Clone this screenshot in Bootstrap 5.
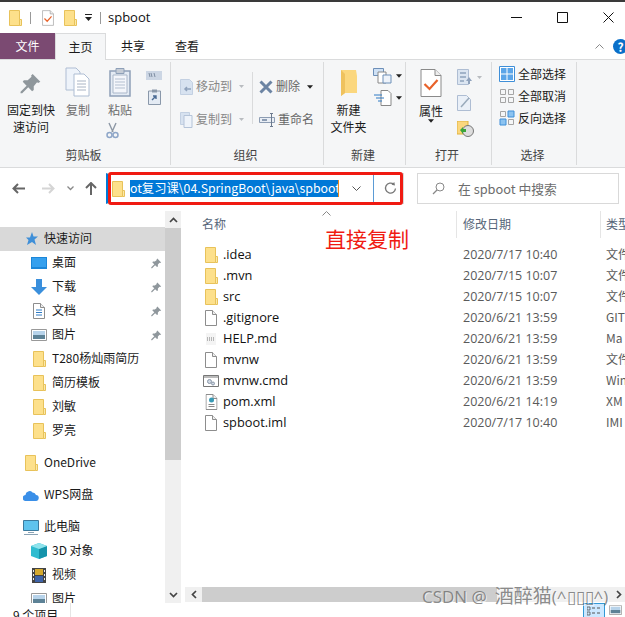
<!DOCTYPE html>
<html lang="zh-CN">

<head>
    <meta charset="UTF-8" />
    <meta name="viewport" content="width=device-width, initial-scale=1.0">
    <title>spboot</title>
    <link href="https://cdn.jsdelivr.net/npm/bootstrap@5.3.0/dist/css/bootstrap.min.css" rel="stylesheet">
    <style>
        html, body { height: 617px; overflow: hidden; }
        body { font-family: "Noto Sans CJK SC", "Open Sans", sans-serif; font-size: 12px; line-height: 1.2; color: #1a1a1a; background: #fff; }
        svg { display: block; flex: none; }
        .defs-holder { position: absolute; }
        .win { position: relative; width: 625px; height: 617px; overflow: hidden; border-top: 2px solid #3a3a3a; }

        /* title bar */
        .title-row { height: 31px; padding-left: 9px; }
        .title-name { font-family: "Open Sans", sans-serif; font-size: 13px; margin-left: 7px; color: #111; }
        .qsep { width: 1px; height: 12px; background: #999; margin: 0 8px; }
        .qsep-end { margin-right: 0; }
        .q-doc { margin-left: 3px; }
        .q-folder { margin-left: 10px; }
        .win-btns { margin-left: auto; margin-right: -6px; }
        .win-btn { width: 46px; display: flex; justify-content: center; }

        /* tabs */
        .tabs-row { height: 27px; border-bottom: 1px solid #dadbdc; }
        .tab-file { width: 55px; height: 26px; background: #7b4a72; color: #fff; display: flex; align-items: center; justify-content: center; }
        .tab-item { width: 54px; height: 27px; display: flex; align-items: center; justify-content: center; }
        .tab-on { width: 51px; background: #f5f6f7; border: 1px solid #dadbdc; border-bottom: 0; }
        .help-wrap { margin-left: auto; margin-right: -3px; gap: 9px; }
        .help-dot { width: 15px; height: 15px; border-radius: 50%; background: #0a6fc9; color: #fff; font-weight: 700; font-size: 12px; text-align: center; line-height: 15px; }

        /* ribbon */
        .ribbon { height: 108px; background: #f5f6f7; border-bottom: 1px solid #dadbdc; padding-top: 2px; }
        .rgroup { height: 103px; border-right: 1px solid #dadbdc; display: flex; flex-direction: column; }
        .rg-clip { width: 171px; }
        .rg-org { width: 153px; }
        .rg-new { width: 82px; }
        .rg-open { width: 86px; }
        .rg-sel { width: 85px; }
        .rbody { flex: 1; display: flex; min-height: 0; }
        .rbody-org { padding: 8px 0 0 9px; }
        .rbody-sel { flex-direction: column; padding: 1px 0 0 7px; }
        .rlabel { height: 20px; line-height: 20px; text-align: center; color: #444; padding-right: 3px; }
        .big-btn { display: flex; flex-direction: column; align-items: center; text-align: center; line-height: 17px; }
        .dim { color: #6d6d6d; }
        .dimmer { color: #888; }
        .dark-grey { color: #666; }
        .b-pin { width: 62px; padding-top: 11px; }
        .b-pin svg { margin-bottom: 6px; }
        .b-copy { width: 32px; padding-top: 5px; }
        .b-paste { width: 52px; padding-top: 5px; }
        .b-new { width: 49px; padding-top: 7px; }
        .b-prop { width: 50px; padding-top: 7px; }
        .b-prop svg:first-child { margin-bottom: 5px; }
        .ic-gap { margin-bottom: 4px; }
        .scissors { margin: 4px 16px 0 0; }
        .clip-side { padding-top: 9px; gap: 9px; }
        .col-movers { width: 72px; }
        .org-sep { width: 1px; height: 52px; background: #dadbdc; margin: 2px 6px 0 0; }
        .mini { display: flex; align-items: center; gap: 3px; height: 33px; white-space: nowrap; }
        .sel-row { display: flex; align-items: center; gap: 3px; height: 22px; white-space: nowrap; }
        .new-side { padding-top: 6px; gap: 6px; }
        .open-side { padding: 7px 0 0 1px; gap: 10px; }

        /* address bar */
        .addr-row { height: 40px; padding-top: 5px; }
        .nav-ic { height: 31px; display: flex; align-items: center; justify-content: center; }
        .nav-back { width: 33px; padding-left: 3px; }
        .nav-fwd { width: 30px; }
        .nav-drop { width: 14px; }
        .nav-up { width: 27px; }
        .addr-box { width: 298px; height: 31px; margin-left: 2px; border: 1px solid #d9d9d9; border-left: 2px solid #0078d7; display: flex; align-items: center; }
        .addr-folder { margin-left: 4px; }
        .addr-text { width: 209px; height: 17px; margin-left: 5px; background: #0078d7; color: #fff; font-size: 12.3px; line-height: 16px; overflow: hidden; white-space: nowrap; border-right: 1px solid #e8871e; flex: none; }
        .addr-chev { width: 34px; display: flex; justify-content: center; flex: none; }
        .addr-refresh { width: 30px; height: 29px; border-left: 1px solid #5b9bd5; padding-left: 3px; display: flex; align-items: center; justify-content: center; flex: none; }
        .search-box { width: 202px; height: 31px; margin-left: 13px; border: 1px solid #d9d9d9; color: #6d6d6d; padding-left: 14px; font-size: 12.8px; }
        .search-box span { margin-left: 13px; }

        /* left tree */
        .content { height: 395px; }
        .side { width: 165px; padding-top: 19px; overflow: hidden; height: 395px; flex: none; }
        .nav-row { height: 24px; display: flex; align-items: center; white-space: nowrap; padding-left: 31px; gap: 5px; }
        .nav-row span { margin-bottom: 2px; }
        .nav-row.lvl0 { padding-left: 23px; }
        .nav-row.on { background: #d9d9d9; }
        .nav-gap { height: 8px; }
        .nav-pin { margin-left: auto; margin-right: 3px; }
        .ico-slot { width: 16px; display: flex; justify-content: center; flex: none; }
        .vbar { width: 16px; background: #f0f0f0; flex: none; height: 392px; margin-top: 3px; display: flex; flex-direction: column; }
        .vbar-arrow { height: 17px; display: flex; align-items: center; justify-content: center; flex: none; }
        .vbar-thumb { height: 232px; background: #cdcdcd; }
        .vbar-rest { flex: 1; }

        /* file list */
        .main-pane { flex: 1; min-width: 0; padding: 3px 0 1px 2px; position: relative; overflow: hidden; height: 395px; display: flex; flex-direction: column; }
        .cols { display: flex; height: 27px; align-items: center; color: #566579; position: relative; flex: none; }
        .col-name { width: 273px; padding-left: 19px; flex: none; }
        .col-date { width: 144px; padding-left: 6px; flex: none; border-left: 1px solid #e5e5e5; height: 27px; line-height: 26px; }
        .col-kind { padding-left: 5px; border-left: 1px solid #e5e5e5; height: 27px; line-height: 26px; white-space: nowrap; }
        .sort-up { position: absolute; left: 139px; top: 0; }
        .file-list { flex: 1; padding-top: 6px; min-height: 0; }
        .file-row { height: 21px; display: flex; align-items: center; white-space: nowrap; }
        .f-name { width: 272px; flex: none; display: flex; align-items: center; padding-left: 20px; gap: 4px; font-size: 12.8px; font-family: "Open Sans", sans-serif; color: #111; }
        .f-date { width: 143px; flex: none; padding-left: 8px; font-family: "Open Sans", sans-serif; font-size: 12.5px; color: #5a5a5a; }
        .f-kind { padding-left: 8px; color: #5a5a5a; }
        .hbar { height: 15px; margin-left: 2px; background: #f0f0f0; display: flex; align-items: center; flex: none; }
        .hbar-arrow { width: 17px; display: flex; justify-content: center; flex: none; }
        .hbar-thumb { width: 295px; height: 15px; background: #cdcdcd; }
        .hbar-end { margin-left: auto; margin-right: -2px; }

        /* status bar */
        .status { height: 14px; padding: 0 3px 0 13px; overflow: hidden; line-height: 24px; display: flex; }
        .status-sep { width: 1px; height: 14px; background: #e5e5e5; margin-left: 12px; }
        .view-on { margin-left: auto; width: 22px; height: 14px; background: #cce8ff; border: 1px solid #3399d6; border-bottom: 0; padding: 2px 0 0 3px; }
        .view-two { margin: 2px 0 0 4px; }

        /* annotations */
        .red-frame { position: absolute; left: 108px; top: 170px; width: 295px; height: 33px; border: 3px solid #f01a12; border-radius: 3px; }
        .red-note { position: absolute; left: 325px; top: 223px; font-size: 21px; line-height: 27px; color: #f01a12; }
        .watermark { position: absolute; left: 422px; top: 582px; font-size: 17px; line-height: 24px; color: rgba(110, 110, 110, .8); text-shadow: 1px 1px 0 rgba(255, 255, 255, .6); white-space: nowrap; font-family: "Open Sans", "Noto Sans CJK SC", sans-serif; }
        .wm-cjk { font-size: 19px; margin-left: 8px; }
    </style>
</head>

<body>
    <svg width="0" height="0" class="defs-holder">
        <defs>
            <symbol id="folder" viewBox="0 0 13 16">
                <path d="M.5.500h10v15H.5z" fill="#fde08b" stroke="#e8c25a"/>
                <path d="M10.500 9.500h2v6h-2z" fill="#fbe9a8" stroke="#e8c25a"/>
            </symbol>
            <symbol id="page" viewBox="0 0 12 16">
                <path d="M.5.500h7l4 4v11H.5z" fill="#fff" stroke="#8d8d8d"/>
                <path d="M7.500.5v4h4" fill="#eee" stroke="#8d8d8d"/>
            </symbol>
            <symbol id="pin" viewBox="0 0 20 20">
                <path d="M11.500 1l7 7-2 1-1-.5-3 3.500v3.500l-1.500 1-3.500-3.500-5.500 5.500-1.500 0 0-1.500 5.500-5.500-3.500-3.500 1-1.500h3.500l3.500-3-.5-1z" fill="#8f979c"/>
            </symbol>
            <symbol id="check-doc" viewBox="0 0 22 28">
                <path d="M1 .5h14l6 6v21h-20z" fill="#fff" stroke="#8a8a8a"/>
                <path d="M15 .5v6h6" fill="#eee" stroke="#8a8a8a"/>
                <path d="M4.500 15l5 5 8-9" fill="none" stroke="#e8622a" stroke-width="2.200"/>
            </symbol>
            <symbol id="caret" viewBox="0 0 7 4">
                <path d="M0 0h7l-3.500 4z" fill="#222"/>
            </symbol>
            <symbol id="caret-dim" viewBox="0 0 7 4">
                <path d="M0 0h7l-3.500 4z" fill="#b9bcc0"/>
            </symbol>
            <symbol id="photo" viewBox="0 0 16 12">
                <path d="M.5.500h15v11H.5z" fill="#fff" stroke="#999"/>
                <path d="M2 2h12v4H2z" fill="#b7d3ea"/>
                <path d="M2 6h12v4H2z" fill="#5d8296"/>
            </symbol>
        </defs>
    </svg>

    <div class="win">
        <!-- title bar -->
        <div class="title-row d-flex align-items-center">
            <svg width="13" height="16"><use href="#folder"/></svg>
            <div class="qsep"></div>
            <svg width="12" height="16" class="q-doc"><use href="#check-doc"/></svg>
            <svg width="13" height="16" class="q-folder"><use href="#folder"/></svg>
            <svg width="7" height="7" class="ms-2"><path d="M0 0h7v1H0z" fill="#222"/><path d="M0 3h7L3.500 7z" fill="#222"/></svg>
            <div class="qsep qsep-end"></div>
            <div class="title-name">spboot</div>
            <div class="win-btns d-flex align-items-center">
                <div class="win-btn"><svg width="11" height="11"><path d="M0 5.500h11" stroke="#111"/></svg></div>
                <div class="win-btn"><svg width="11" height="11"><path d="M.5.500h10v10H.5z" fill="none" stroke="#111"/></svg></div>
                <div class="win-btn"><svg width="11" height="11"><path d="M.5.500l10 10M10.500.500l-10 10" stroke="#111"/></svg></div>
            </div>
        </div>

        <!-- tabs -->
        <div class="tabs-row d-flex">
            <div class="tab-file">文件</div>
            <div class="tab-item tab-on">主页</div>
            <div class="tab-item">共享</div>
            <div class="tab-item">查看</div>
            <div class="help-wrap d-flex align-items-center">
                <svg width="9" height="5"><path d="M.5 4.500l4-4 4 4" fill="none" stroke="#888"/></svg>
                <div class="help-dot">?</div>
            </div>
        </div>

        <!-- ribbon -->
        <div class="ribbon d-flex">
            <div class="rgroup rg-clip">
                <div class="rbody">
                    <div class="big-btn b-pin">
                        <svg width="22" height="22"><use href="#pin"/></svg>
                        <div>固定到快<br>速访问</div>
                    </div>
                    <div class="big-btn dim b-copy">
                        <svg width="26" height="30" class="ic-gap" viewBox="0 0 26 30"><path d="M1 1h10l4 4v18H1z" fill="#eef3fa" stroke="#aebdd3"/><path d="M9 7h10l5 5v17H9z" fill="#fff" stroke="#aebdd3"/><path d="M12 14h9M12 17h9M12 20h9M12 23h9" stroke="#a9b4c4"/></svg>
                        <div>复制</div>
                    </div>
                    <div class="big-btn dim b-paste">
                        <svg width="22" height="30" class="ic-gap" viewBox="0 0 22 30"><path d="M1 4h20v25H1z" fill="#e4ebf4" stroke="#8ea0b8" stroke-width="1.500"/><path d="M4 8h14v18H4z" fill="#f4f6fb" stroke="#aab7c9"/><path d="M7 1.500h8v5H7z" fill="#c5ccd6" stroke="#8ea0b8"/><path d="M6 12h10M6 15h10M6 18h10M6 21h10" stroke="#b3bfd0"/></svg>
                        <div>粘贴</div>
                        <svg width="13" height="17" viewBox="0 0 13 17" class="scissors"><path d="M3 1l4 9M10 1l-4 9" stroke="#8c97a5" stroke-width="1.400"/><circle cx="3.500" cy="13" r="2.500" fill="none" stroke="#8ea6c8" stroke-width="1.500"/><circle cx="9.500" cy="13" r="2.500" fill="none" stroke="#8ea6c8" stroke-width="1.500"/></svg>
                    </div>
                    <div class="d-flex flex-column align-items-center clip-side">
                        <svg width="16" height="9"><path d="M0 0h16v9H0z" fill="#ccd6e4"/><path d="M3 2l1 4M5 2l1 4M8 2l1 4" stroke="#6a7a90" stroke-width=".8"/></svg>
                        <svg width="13" height="16" viewBox="0 0 13 16"><path d="M.5 2h12v13.500H.5z" fill="#e4ebf4" stroke="#8a98aa"/><path d="M4 .5h5v3H4z" fill="#8a98aa"/><path d="M4 11l4-4M5 7h3v3" fill="none" stroke="#4a6b95" stroke-width="1.400"/></svg>
                    </div>
                </div>
                <div class="rlabel">剪贴板</div>
            </div>

            <div class="rgroup rg-org">
                <div class="rbody rbody-org">
                    <div class="dimmer col-movers">
                        <div class="mini"><svg width="13" height="16"><path d="M.5.500h9l3 3v12H.5z" fill="#d7e2f0" stroke="#c3d0e2"/><path d="M11 10H5M7 8l-2 2 2 2" fill="none" stroke="#8fa2bc" stroke-width="1.500"/></svg><span>移动到</span><svg width="5" height="3" class="ms-1"><use href="#caret-dim"/></svg></div>
                        <div class="mini"><svg width="13" height="16"><path d="M.5.500h9v12H.5z" fill="#d7e2f0" stroke="#c3d0e2"/><path d="M4 3.500h8v12H4z" fill="#eef3fa" stroke="#b4c3d8"/></svg><span>复制到</span><svg width="5" height="3" class="ms-1"><use href="#caret-dim"/></svg></div>
                    </div>
                    <div class="org-sep"></div>
                    <div>
                        <div class="mini dark-grey"><svg width="14" height="14" viewBox="0 0 14 14"><path d="M1.500 1.500l11 11M12.500 1.500l-11 11" stroke="#6c84a3" stroke-width="3"/></svg><span>删除</span><svg width="6" height="4" class="ms-1"><use href="#caret"/></svg></div>
                        <div class="mini dark-grey"><svg width="16" height="14" viewBox="0 0 16 14"><path d="M.5 4.500h15v5H.5z" fill="#e9eef5" stroke="#8d9db3"/><path d="M11 .5h3M12.500.5v13M11 13.500h3" stroke="#6c7a8e" fill="none"/><path d="M3 7h5" stroke="#8d9db3" stroke-width="2"/></svg><span>重命名</span></div>
                    </div>
                </div>
                <div class="rlabel">组织</div>
            </div>

            <div class="rgroup rg-new">
                <div class="rbody">
                    <div class="big-btn b-new">
                        <svg width="20" height="28" viewBox="0 0 20 28" class="ic-gap"><path d="M2 1h15l1 6v17H6l-4 3z" fill="#fbd77e"/><path d="M2 1l4 4v19l-4 3z" fill="#efc25e"/></svg>
                        <div>新建<br>文件夹</div>
                    </div>
                    <div class="d-flex flex-column new-side">
                        <div class="d-flex align-items-center gap-1"><svg width="19" height="16" viewBox="0 0 19 16"><path d="M.5.500h10v7H.5z" fill="#cfe1f5" stroke="#6d8fb8"/><path d="M5 4h8v11H5z" fill="#fff" stroke="#888"/><path d="M10 7h8v8h-8z" fill="#eef3fa" stroke="#6d8fb8"/></svg><svg width="6" height="4"><use href="#caret"/></svg></div>
                        <div class="d-flex align-items-center gap-1"><svg width="19" height="16" viewBox="0 0 19 16"><path d="M8 .5h7l3 3v12H8z" fill="#fff" stroke="#888"/><path d="M1 5h8M3 8h8M5 11h4" stroke="#2f7bc4"/></svg><svg width="6" height="4"><use href="#caret"/></svg></div>
                    </div>
                </div>
                <div class="rlabel">新建</div>
            </div>

            <div class="rgroup rg-open">
                <div class="rbody">
                    <div class="big-btn b-prop">
                        <svg width="22" height="28"><use href="#check-doc"/></svg>
                        <div>属性</div>
                        <svg width="6" height="4"><use href="#caret"/></svg>
                    </div>
                    <div class="d-flex flex-column open-side">
                        <div class="d-flex align-items-center gap-1"><svg width="16" height="16" viewBox="0 0 16 16"><path d="M.5.500h11v15H.5z" fill="#dbe5f1" stroke="#aebdd3"/><path d="M3 4h6M3 8h6M3 12h4" stroke="#8fa2bc" stroke-width="1.500"/><path d="M12 8l3 4h-2v3h-2v-3H9z" fill="#8fa2bc"/></svg><svg width="5" height="3"><use href="#caret-dim"/></svg></div>
                        <svg width="15" height="16" viewBox="0 0 15 16"><path d="M.5.500h9l4 4v11H.5z" fill="#eaf0f8" stroke="#aebdd3"/><path d="M4 12l8-9" stroke="#9ab" stroke-width="1.500"/></svg>
                        <svg width="17" height="16" viewBox="0 0 17 16"><path d="M0 0h11v13H0z" fill="#fbd77e" stroke="#e0b23f"/><circle cx="11" cy="10" r="5.500" fill="#ddd" stroke="#777"/><path d="M3 9l3-3v2h3v3H6v2z" fill="#3aa53a"/></svg>
                    </div>
                </div>
                <div class="rlabel">打开</div>
            </div>

            <div class="rgroup rg-sel">
                <div class="rbody rbody-sel">
                    <div class="sel-row"><svg width="16" height="16"><path d="M.5.500h15v15H.5z" fill="#fff" stroke="#3f8fd8"/><path d="M2 2h5.500v5.500H2zM8.500 2H14v5.500H8.500zM2 8.500h5.500V14H2zM8.500 8.500H14V14H8.500z" fill="#5ba5e8"/></svg><span>全部选择</span></div>
                    <div class="sel-row"><svg width="16" height="16"><path d="M1.500 1.500h5v5h-5zM9.500 1.500h5v5h-5zM1.500 9.500h5v5h-5zM9.500 9.500h5v5h-5z" fill="none" stroke="#a5a5a5"/></svg><span>全部取消</span></div>
                    <div class="sel-row"><svg width="16" height="16"><path d="M1.500 1.500h5v5h-5zM9.500 9.500h5v5h-5z" fill="none" stroke="#a5a5a5"/><path d="M9 1h6v6H9zM1 9h6v6H1z" fill="#8cc3f0" stroke="#3f8fd8"/></svg><span>反向选择</span></div>
                </div>
                <div class="rlabel">选择</div>
            </div>
        </div>

        <!-- address bar -->
        <div class="addr-row d-flex">
            <div class="nav-ic nav-back"><svg width="13" height="11"><path d="M6 1L1.500 5.500 6 10M1.500 5.500H13" fill="none" stroke="#666" stroke-width="2"/></svg></div>
            <div class="nav-ic nav-fwd"><svg width="13" height="11"><path d="M7 1l4.500 4.500L7 10M11.500 5.500H0" fill="none" stroke="#d5d5d5" stroke-width="2"/></svg></div>
            <div class="nav-ic nav-drop"><svg width="7" height="5"><path d="M.5.500l3 3 3-3" fill="none" stroke="#888" stroke-width="1.300"/></svg></div>
            <div class="nav-ic nav-up"><svg width="12" height="13"><path d="M1 6l5-5 5 5M6 1v12" fill="none" stroke="#666" stroke-width="2"/></svg></div>
            <div class="addr-box">
                <svg width="13" height="16" class="addr-folder"><use href="#folder"/></svg>
                <div class="addr-text">ot复习课\04.SpringBoot\java\spboot</div>
                <div class="addr-chev"><svg width="9" height="5"><path d="M.5.500l4 4 4-4" fill="none" stroke="#555"/></svg></div>
                <div class="addr-refresh"><svg width="13" height="13" viewBox="0 0 13 13"><path d="M9.800 2.300a5 5 0 1 0 1.700 4.200" fill="none" stroke="#777" stroke-width="1.300"/><path d="M7.500 2.800L11 3.600 10.300 0z" fill="#777"/></svg></div>
            </div>
            <div class="search-box d-flex align-items-center">
                <svg width="13" height="13"><circle cx="8" cy="5" r="4" fill="none" stroke="#888"/><path d="M5 8l-4 4" stroke="#888" stroke-width="1.300"/></svg>
                <span>在 spboot 中搜索</span>
            </div>
        </div>

        <!-- content -->
        <div class="content d-flex">
            <div class="side">
                <div class="nav-row lvl0 on">
                    <svg width="16" height="14" viewBox="0 0 16 14"><path d="M9 0l1.500 4.500H15L11.500 7.500 13 13 9 10 4 13l1.500-5L3 5.500h4z" fill="#3f8fd8"/></svg>
                    <span>快速访问</span>
                </div>
                <div class="nav-row">
                    <svg width="16" height="12"><path d="M0 0h16v12H0z" fill="#1c86d8"/><path d="M1 1h14v9H1z" fill="#35a0ee"/></svg>
                    <span>桌面</span>
                    <svg class="nav-pin" width="11" height="11"><use href="#pin"/></svg>
                </div>
                <div class="nav-row">
                    <svg width="16" height="16"><path d="M5 0h6v8h5l-8 8-8-8h5z" fill="#3a8fdc"/></svg>
                    <span>下载</span>
                    <svg class="nav-pin" width="11" height="11"><use href="#pin"/></svg>
                </div>
                <div class="nav-row">
                    <div class="ico-slot"><svg width="12" height="16" viewBox="0 0 12 16"><use href="#page"/><path d="M3 7h6M3 9.500h6M3 12h6" stroke="#2f7bc4"/></svg></div>
                    <span>文档</span>
                    <svg class="nav-pin" width="11" height="11"><use href="#pin"/></svg>
                </div>
                <div class="nav-row">
                    <svg width="16" height="12"><use href="#photo"/></svg>
                    <span>图片</span>
                    <svg class="nav-pin" width="11" height="11"><use href="#pin"/></svg>
                </div>
                <div class="nav-row"><div class="ico-slot"><svg width="13" height="16"><use href="#folder"/></svg></div><span>T280杨灿雨简历</span></div>
                <div class="nav-row"><div class="ico-slot"><svg width="13" height="16"><use href="#folder"/></svg></div><span>简历模板</span></div>
                <div class="nav-row"><div class="ico-slot"><svg width="13" height="16"><use href="#folder"/></svg></div><span>刘敏</span></div>
                <div class="nav-row"><div class="ico-slot"><svg width="13" height="16"><use href="#folder"/></svg></div><span>罗亮</span></div>
                <div class="nav-gap"></div>
                <div class="nav-row lvl0"><div class="ico-slot"><svg width="13" height="16"><use href="#folder"/></svg></div><span>OneDrive</span></div>
                <div class="nav-gap"></div>
                <div class="nav-row lvl0">
                    <svg width="16" height="11" viewBox="0 0 16 11"><path d="M3 11a3 3 0 0 1-.5-6 4 4 0 0 1 7-2.500 3.500 3.500 0 0 1 3.500 2.500 3 3 0 0 1-.5 6z" fill="#3a8fe8"/></svg>
                    <span>WPS网盘</span>
                </div>
                <div class="nav-gap"></div>
                <div class="nav-row lvl0">
                    <svg width="16" height="15" viewBox="0 0 16 15"><path d="M.5.500h15v10H.5z" fill="#5ec3ee" stroke="#3b7a9e"/><path d="M5 12h6v1H5zM1 14h14v1H1z" fill="#8aa3b5"/></svg>
                    <span>此电脑</span>
                </div>
                <div class="nav-row">
                    <svg width="16" height="16" viewBox="0 0 16 16"><path d="M8 0l8 3v10l-8 3-8-3V3z" fill="#2fbcd0"/><path d="M8 6l8-3v10l-8 3z" fill="#1593aa"/><path d="M8 0l8 3-8 3-8-3z" fill="#8fe3ec"/></svg>
                    <span>3D 对象</span>
                </div>
                <div class="nav-row">
                    <svg width="16" height="15" viewBox="0 0 16 15"><path d="M1 0h14v15H1z" fill="#444"/><path d="M4 1h8v6H4z" fill="#d4a92e"/><path d="M4 8h8v6H4z" fill="#3e63a8"/><path d="M2 2h1v2H2zM2 6h1v2H2zM2 10h1v2H2zM13 2h1v2h-1zM13 6h1v2h-1zM13 10h1v2h-1z" fill="#eee"/></svg>
                    <span>视频</span>
                </div>
                <div class="nav-row">
                    <svg width="16" height="12"><use href="#photo"/></svg>
                    <span>图片</span>
                </div>
            </div>

            <div class="vbar">
                <div class="vbar-arrow"><svg width="9" height="6"><path d="M1 5l3.500-3.500L8 5" fill="none" stroke="#444" stroke-width="1.700"/></svg></div>
                <div class="vbar-thumb"></div>
                <div class="vbar-rest"></div>
                <div class="vbar-arrow"><svg width="9" height="6"><path d="M1 1l3.500 3.500L8 1" fill="none" stroke="#444" stroke-width="1.700"/></svg></div>
            </div>

            <div class="main-pane">
                <div class="cols">
                    <div class="col-name">名称</div>
                    <div class="col-date">修改日期</div>
                    <div class="col-kind">类型</div>
                    <svg class="sort-up" width="9" height="5"><path d="M.5 4.500l4-4 4 4" fill="none" stroke="#888"/></svg>
                </div>
                <div class="file-list" id="files"></div>
                <div class="hbar">
                    <div class="hbar-arrow"><svg width="6" height="9"><path d="M5 1L1.500 4.500 5 8" fill="none" stroke="#444" stroke-width="1.700"/></svg></div>
                    <div class="hbar-thumb"></div>
                    <div class="hbar-arrow hbar-end"><svg width="6" height="9"><path d="M1 1l3.500 3.500L1 8" fill="none" stroke="#444" stroke-width="1.700"/></svg></div>
                </div>
            </div>
        </div>

        <div class="status">
            <span>9 个项目</span>
            <div class="status-sep"></div>
            <div class="view-on"><svg width="14" height="11"><path d="M0 1h3v3H0zM0 6h3v3H0z" fill="none" stroke="#555" stroke-width=".8"/><path d="M5 2h3M10 2h3M5 7h3M10 7h3" stroke="#555"/></svg></div>
            <svg class="view-two" width="13" height="10" viewBox="0 0 16 12"><use href="#photo"/></svg>
        </div>

        <!-- annotations on top of the screenshot -->
        <div class="red-frame"></div>
        <div class="red-note">直接复制</div>
        <div class="watermark">CSDN @<span class="wm-cjk">酒醉猫</span>(^▯▯▯^)</div>
    </div>

    <script src="https://cdn.jsdelivr.net/npm/bootstrap@5.3.0/dist/js/bootstrap.bundle.min.js"></script>
    <script>
        const files = [
            ["folder", ".idea", "2020/7/17 10:40", "文件夹"],
            ["folder", ".mvn", "2020/7/15 10:07", "文件夹"],
            ["folder", "src", "2020/7/15 10:07", "文件夹"],
            ["page", ".gitignore", "2020/6/21 13:59", "GIT"],
            ["md", "HELP.md", "2020/6/21 13:59", "Ma"],
            ["page", "mvnw", "2020/6/21 13:59", "文件"],
            ["cmd", "mvnw.cmd", "2020/6/21 13:59", "Win"],
            ["xml", "pom.xml", "2020/6/21 14:19", "XM"],
            ["page", "spboot.iml", "2020/7/17 10:40", "IMI"],
        ];
        const icons = {
            folder: '<svg width="13" height="16"><use href="#folder"/></svg>',
            page: '<svg width="12" height="16"><use href="#page"/></svg>',
            md: '<svg width="12" height="14" viewBox="0 0 12 14"><path d="M1 1h10v12H1z" fill="#f4f4f4"/><path d="M2 6h8M2 8h8" stroke="#777" stroke-dasharray="1 1"/></svg>',
            cmd: '<svg width="16" height="12" viewBox="0 0 16 12"><path d="M.5.500h15v11H.5z" fill="#fff" stroke="#777"/><path d="M1 1h14v2H1z" fill="#bbb"/><circle cx="6.500" cy="6.500" r="2" fill="#cfd8e3" stroke="#8a97a8"/><circle cx="10" cy="8.500" r="1.500" fill="#cfd8e3" stroke="#8a97a8"/></svg>',
            xml: '<svg width="13" height="16" viewBox="0 0 12 16"><use href="#page"/><circle cx="6" cy="6" r="2.500" fill="#3a9ab5"/><path d="M3 10.500h6M3 12.500h6" stroke="#888"/></svg>',
        };
        document.getElementById("files").innerHTML = files.map((f) => `
            <div class="file-row">
                <div class="f-name"><span class="ico-slot">${icons[f[0]]}</span>${f[1]}</div>
                <div class="f-date">${f[2]}</div>
                <div class="f-kind">${f[3]}</div>
            </div>`).join("");
    </script>
</body>

</html>
